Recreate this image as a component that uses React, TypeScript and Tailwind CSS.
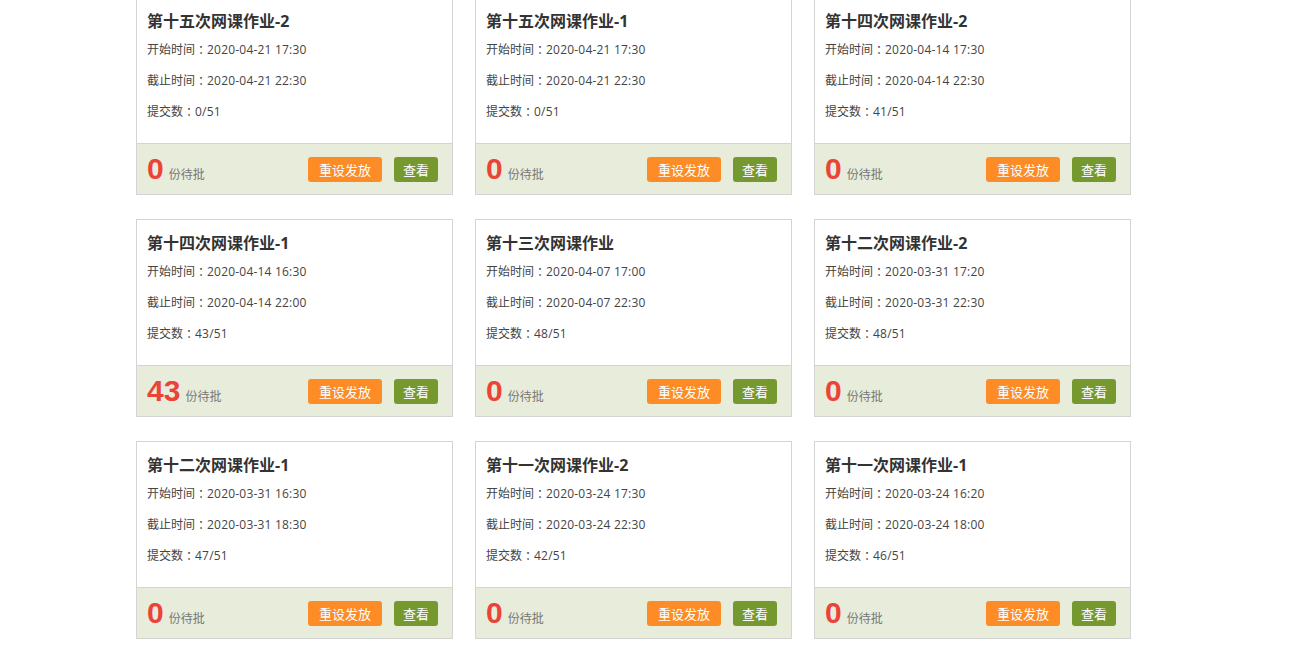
import React from "react";

type Hw = { title: string; start: string; end: string; count: string; pending: number };

const data: Hw[] = [
  { title: "第十五次网课作业-2", start: "2020-04-21 17:30", end: "2020-04-21 22:30", count: "0/51", pending: 0 },
  { title: "第十五次网课作业-1", start: "2020-04-21 17:30", end: "2020-04-21 22:30", count: "0/51", pending: 0 },
  { title: "第十四次网课作业-2", start: "2020-04-14 17:30", end: "2020-04-14 22:30", count: "41/51", pending: 0 },
  { title: "第十四次网课作业-1", start: "2020-04-14 16:30", end: "2020-04-14 22:00", count: "43/51", pending: 43 },
  { title: "第十三次网课作业", start: "2020-04-07 17:00", end: "2020-04-07 22:30", count: "48/51", pending: 0 },
  { title: "第十二次网课作业-2", start: "2020-03-31 17:20", end: "2020-03-31 22:30", count: "48/51", pending: 0 },
  { title: "第十二次网课作业-1", start: "2020-03-31 16:30", end: "2020-03-31 18:30", count: "47/51", pending: 0 },
  { title: "第十一次网课作业-2", start: "2020-03-24 17:30", end: "2020-03-24 22:30", count: "42/51", pending: 0 },
  { title: "第十一次网课作业-1", start: "2020-03-24 16:20", end: "2020-03-24 18:00", count: "46/51", pending: 0 },
];

function Line({ label, value }: { label: string; value: string }) {
  return (
    <div className="flex">
      <span>{label}</span>
      <span className="font-['Noto_Sans_CJK_JP',sans-serif]">：</span>
      <span className="tracking-[0.2px]">{value}</span>
    </div>
  );
}

function Card({ hw }: { hw: Hw }) {
  return (
    <div className="w-[317px] border border-[#d4d4d4] bg-white">
      <div className="h-[145px] pl-[10px] pt-[9px]">
        <div className="h-[28px] leading-[28px] text-[16px] font-bold text-[#333333]">{hw.title}</div>
        <div className="mt-[5px] flex flex-col gap-[11px] text-[12px] leading-[20px] text-[#444444]">
          <Line label="开始时间" value={hw.start} />
          <Line label="截止时间" value={hw.end} />
          <Line label="提交数" value={hw.count} />
        </div>
      </div>
      <div className="flex h-[51px] items-center justify-between border-t border-[#d4d4d4] bg-[#e8eddb] pl-[10px] pr-[14px]">
        <div className="flex items-baseline">
          <span className="font-['Liberation_Sans',sans-serif] text-[30px] font-bold leading-[30px] text-[#ec4338]">{hw.pending}</span>
          <span className="ml-[5px] text-[12px] text-[#777777]">份待批</span>
        </div>
        <div className="flex items-center gap-[12px]">
          <button className="h-[25px] w-[74px] rounded-[3px] bg-[#fd8c27] text-[13px] leading-[26px] text-white">重设发放</button>
          <button className="h-[25px] w-[44px] rounded-[3px] bg-[#76992f] text-[13px] leading-[26px] text-white">查看</button>
        </div>
      </div>
    </div>
  );
}

export default function App() {
  return (
    <div className="h-[648px] w-[1301px] overflow-hidden bg-white font-['Open_Sans','Noto_Sans_CJK_SC',sans-serif]">
      <div className="ml-[136px] mt-[-3px] grid w-[995px] grid-cols-[317px_317px_317px] gap-x-[22px] gap-y-[24px]">
        {data.map((hw) => (
          <Card key={hw.title} hw={hw} />
        ))}
      </div>
    </div>
  );
}
